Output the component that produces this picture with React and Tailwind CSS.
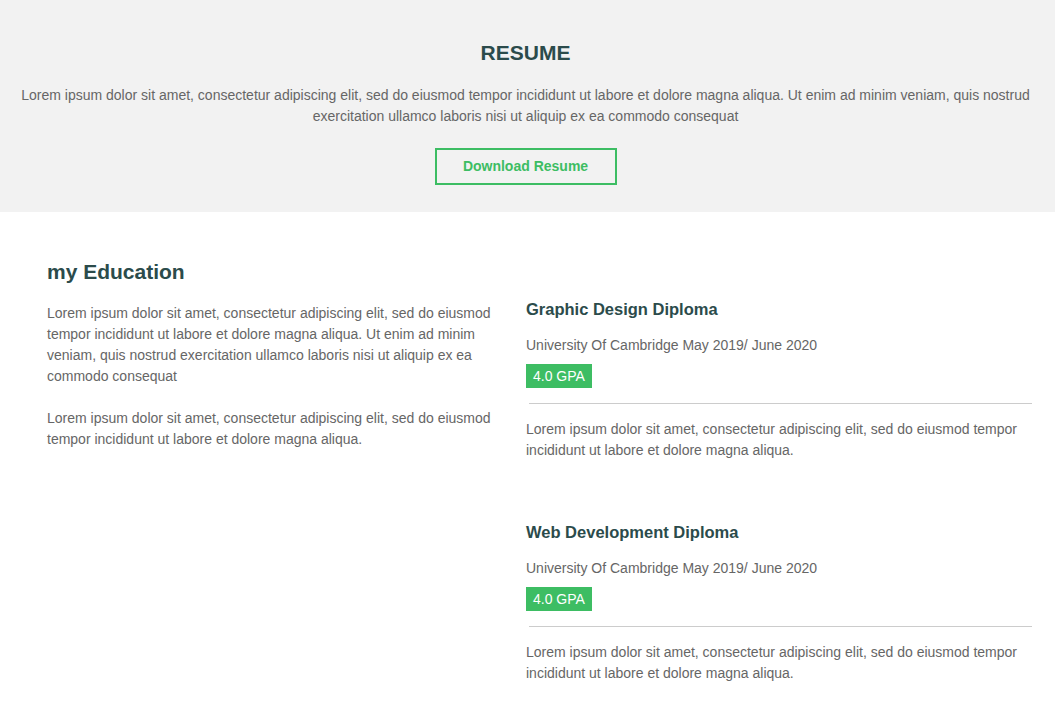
export default function App() {
  const education = [
    {
      title: "Graphic Design Diploma",
      place: "University Of Cambridge May 2019/ June 2020",
      gpa: "4.0 GPA",
    },
    {
      title: "Web Development Diploma",
      place: "University Of Cambridge May 2019/ June 2020",
      gpa: "4.0 GPA",
    },
  ];

  return (
    <div className="min-h-screen bg-white font-['Liberation_Sans',Arial,sans-serif] text-[14px] text-[#666]">
      {/* Top banner */}
      <section className="bg-[#f2f2f2] pl-[13px] pr-[17px] pt-[40px] pb-[27px] text-center">
        <h2 className="text-[21px] leading-[26px] font-bold text-[#2b4b4b]">RESUME</h2>
        <p className="mt-[19px] leading-[21px]">
          Lorem ipsum dolor sit amet, consectetur adipiscing elit, sed do eiusmod tempor incididunt ut labore et dolore magna aliqua. Ut enim ad minim veniam, quis nostrud exercitation ullamco laboris nisi ut aliquip ex ea commodo consequat
        </p>
        <button className="mt-[21px] h-[37px] w-[182px] border-2 border-[#3dbd63] font-bold text-[#3dbd63]">
          Download Resume
        </button>
      </section>

      {/* Education */}
      <section className="flex gap-[30px] pl-[47px] pr-[23px] pt-[47px] pb-[30px]">
        <div className="w-[449px] shrink-0">
          <h3 className="text-[21px] leading-[25px] font-bold text-[#2b4b4b]">my Education</h3>
          <p className="mt-[19px] leading-[21px]">
            Lorem ipsum dolor sit amet, consectetur adipiscing elit, sed do eiusmod tempor incididunt ut labore et dolore magna aliqua. Ut enim ad minim veniam, quis nostrud exercitation ullamco laboris nisi ut aliquip ex ea commodo consequat
          </p>
          <p className="mt-[21px] leading-[21px]">
            Lorem ipsum dolor sit amet, consectetur adipiscing elit, sed do eiusmod tempor incididunt ut labore et dolore magna aliqua.
          </p>
        </div>

        <div className="flex-1 pt-[40px] flex flex-col gap-[61px]">
          {education.map((item, idx) => (
            <div key={idx}>
              <h4 className="text-[16.5px] leading-[20px] font-bold text-[#2b4b4b]">{item.title}</h4>
              <p className="mt-[16px] leading-[21px]">{item.place}</p>
              <span className="mt-[8px] inline-block h-[24px] bg-[#3dbd63] px-[7px] leading-[24px] text-white">
                {item.gpa}
              </span>
              <hr className="ml-[3px] mt-[15px] border-t border-[#cccccc]" />
              <p className="mt-[15px] leading-[21px]">
                Lorem ipsum dolor sit amet, consectetur adipiscing elit, sed do eiusmod tempor incididunt ut labore et dolore magna aliqua.
              </p>
            </div>
          ))}
        </div>
      </section>
    </div>
  );
}
